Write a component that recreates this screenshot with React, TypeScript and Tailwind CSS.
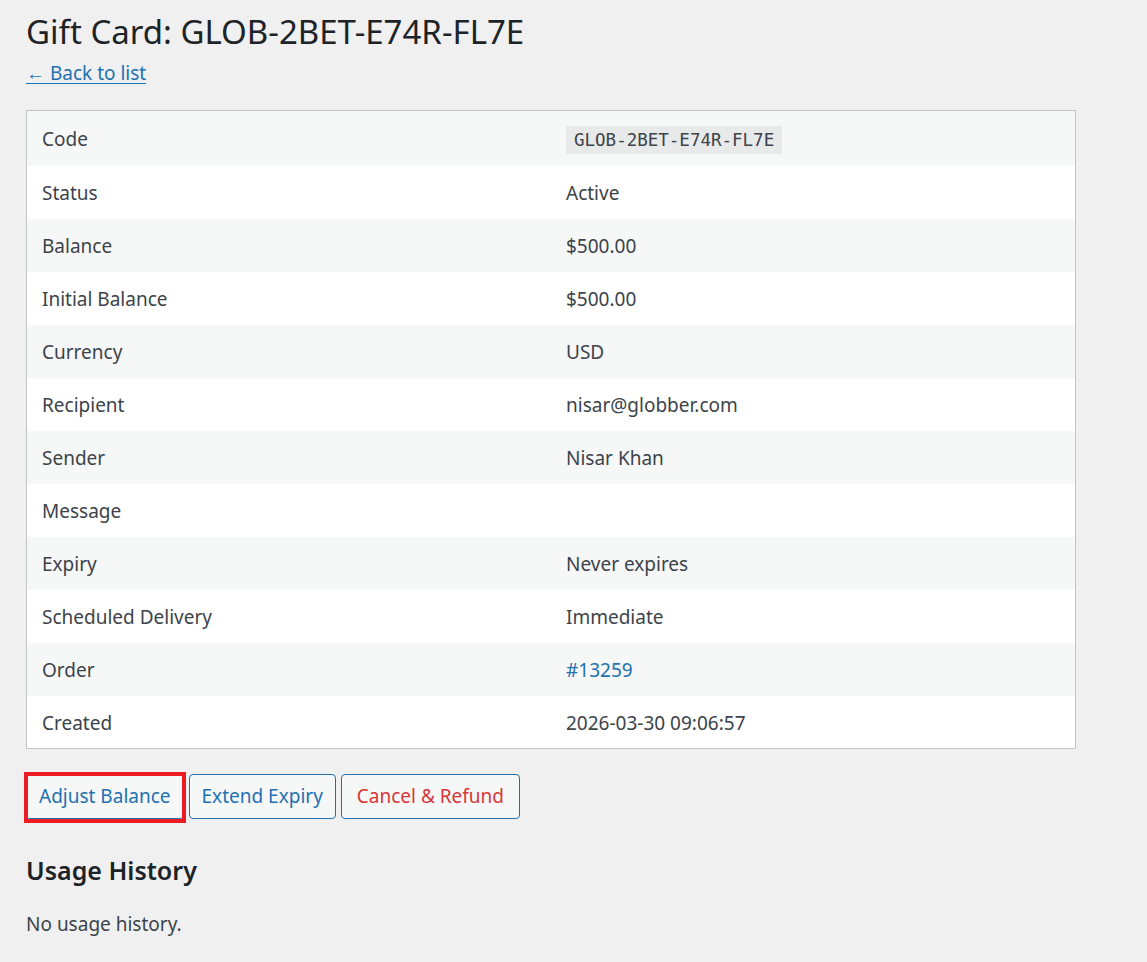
const rows: { label: string; value: string; kind?: "code" | "link" }[] = [
  { label: "Code", value: "GLOB-2BET-E74R-FL7E", kind: "code" },
  { label: "Status", value: "Active" },
  { label: "Balance", value: "$500.00" },
  { label: "Initial Balance", value: "$500.00" },
  { label: "Currency", value: "USD" },
  { label: "Recipient", value: "nisar@globber.com" },
  { label: "Sender", value: "Nisar Khan" },
  { label: "Message", value: "" },
  { label: "Expiry", value: "Never expires" },
  { label: "Scheduled Delivery", value: "Immediate" },
  { label: "Order", value: "#13259", kind: "link" },
  { label: "Created", value: "2026-03-30 09:06:57" },
]

const App = () => {
  return (
    <div className="min-h-[962px] w-full bg-[#f0f0f1] px-[26px] pt-[10px] font-['Noto_Sans',sans-serif] text-[#3c434a]">
      <h1 className="text-[33px] leading-[44px] text-[#1d2327]">Gift Card: GLOB-2BET-E74R-FL7E</h1>
      <a href="#" className="mt-[5px] inline-block text-[19px] leading-[29px] text-[#2271b1] underline underline-offset-[3px]">
        ← Back to list
      </a>

      <table className="mt-[22px] w-[1050px] border border-[#c3c4c7] bg-white text-[19px]">
        <tbody>
          {rows.map((row, idx) => (
            <tr key={idx} className={`${idx === 0 ? "h-[55px]" : "h-[53px]"} ${idx % 2 === 0 ? "bg-[#f6f7f7]" : "bg-white"}`}>
              <td className="w-1/2 px-[15px] pt-[2px] align-middle">{row.label}</td>
              <td className="w-1/2 px-[15px] pt-[2px] align-middle">
                {row.kind === "code" ? (
                  <code className="bg-[#e8e9e9] px-[8px] py-[4px] font-['DejaVu_Sans_Mono',monospace] text-[17.5px] text-[#3c434a]">
                    {row.value}
                  </code>
                ) : row.kind === "link" ? (
                  <a href="#" className="text-[#2271b1]">{row.value}</a>
                ) : (
                  row.value
                )}
              </td>
            </tr>
          ))}
        </tbody>
      </table>

      <div className="mt-[25px] flex gap-[5px] text-[19px]">
        <span className="relative">
          <button className="h-[45px] rounded-[4px] border border-[#2271b1] bg-[#f6f7f7] px-[12px] text-[#2271b1]">
            Adjust Balance
          </button>
          <span className="pointer-events-none absolute -top-[2px] -left-[2px] -right-[2px] -bottom-[4px] border-4 border-[#ed1c24]" />
        </span>
        <button className="h-[45px] rounded-[4px] border border-[#2271b1] bg-[#f6f7f7] px-[12px] text-[#2271b1]">
          Extend Expiry
        </button>
        <button className="h-[45px] rounded-[4px] border border-[#2271b1] bg-[#f6f7f7] px-[15px] text-[#d63638]">
          Cancel &amp; Refund
        </button>
      </div>

      <h2 className="mt-[34px] text-[25px] font-semibold leading-[34px] text-[#1d2327]">Usage History</h2>
      <p className="mt-[23px] text-[19px] leading-[29px]">No usage history.</p>
    </div>
  )
}

export default App
